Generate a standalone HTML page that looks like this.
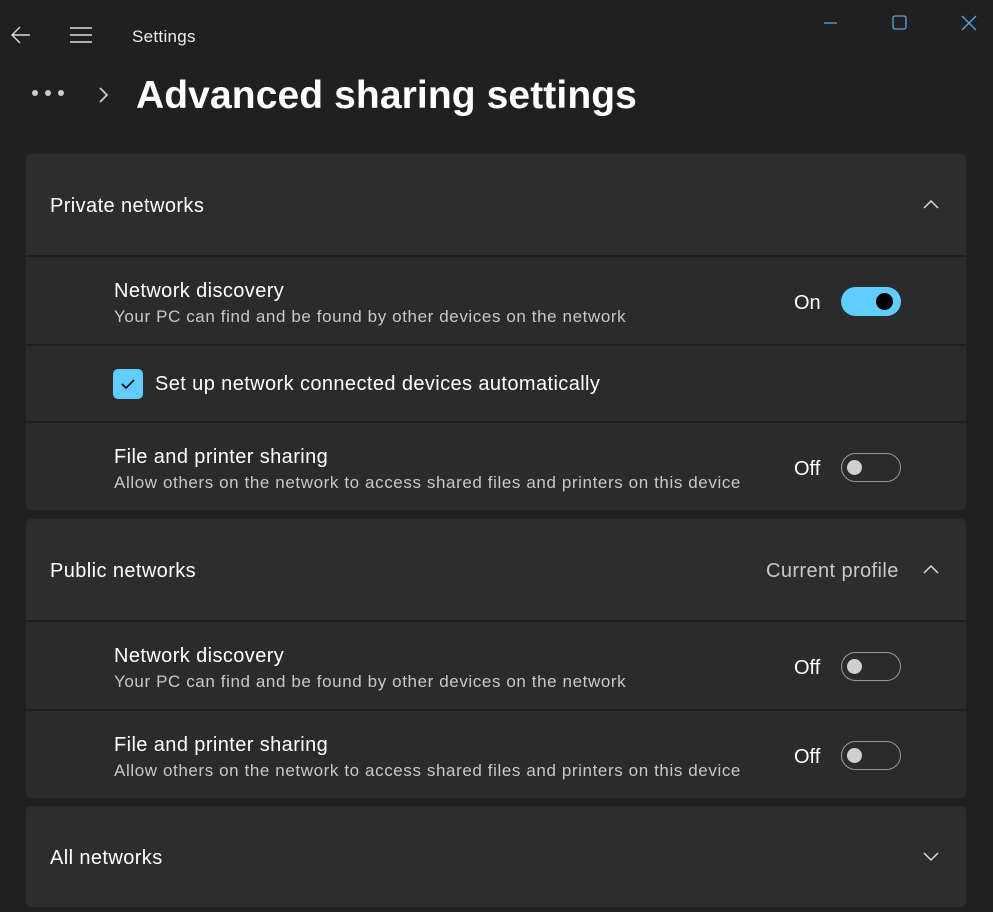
<!DOCTYPE html>
<html><head><meta charset="utf-8"><style>
*{margin:0;padding:0;box-sizing:border-box}
body{width:993px;height:912px;background:#202020;font-family:"Liberation Sans",sans-serif;color:#fff;position:relative;overflow:hidden}
.a{position:absolute}
.card{position:absolute;left:26px;width:940px;background:#2b2b2b;border-radius:5px}
.hdr{position:absolute;left:26px;width:940px;background:#2d2d2d}
.t{position:absolute;font-size:20px;letter-spacing:0.4px;color:#fff}
.s{position:absolute;font-size:17px;letter-spacing:0.6px;color:#c8c8c8}
.lbl{position:absolute;font-size:20px;color:#fff}
.tg{position:absolute;left:841px;width:60px;height:29px;border-radius:15px;border:1.5px solid #9a9a9a}
.tg i{position:absolute;left:5px;top:6px;width:15px;height:15px;border-radius:50%;background:#d0d0d0}
.on{background:#60cdff;border:none}
.on i{left:35px;top:6px;width:17px;height:17px;background:#000}
</style></head><body>
<svg class="a" style="left:10px;top:25px" width="22" height="20"><path d="M20 10H2M10 2L2 10L10 18" stroke="#ddd" stroke-width="1.4" fill="none"/></svg>
<svg class="a" style="left:70px;top:26px" width="22" height="18"><path d="M0 2H22M0 9H22M0 16H22" stroke="#ddd" stroke-width="1.5"/></svg>
<div class="a" style="left:132px;top:27px;font-size:17px;letter-spacing:0.3px;color:#eee">Settings</div>
<svg class="a" style="left:822px;top:15px" width="160" height="16"><path d="M2 8H15" stroke="#5ea6dd" stroke-width="1.3"/><rect x="71" y="1" width="13" height="13" rx="2" stroke="#5ea6dd" stroke-width="1.3" fill="none"/><path d="M140 1L154 15M154 1L140 15" stroke="#5ea6dd" stroke-width="1.3"/></svg>
<svg class="a" style="left:30px;top:88px" width="40" height="10"><circle cx="5" cy="5" r="3" fill="#ccc"/><circle cx="18" cy="5" r="3" fill="#ccc"/><circle cx="31" cy="5" r="3" fill="#ccc"/></svg>
<svg class="a" style="left:97px;top:86px" width="12" height="18"><path d="M3 2L10 9L3 16" stroke="#ccc" stroke-width="1.8" fill="none"/></svg>
<div class="a" style="left:136px;top:74px;font-size:39px;font-weight:bold;letter-spacing:0.1px">Advanced sharing settings</div>

<div class="card" style="top:154px;height:356px"></div>
<div class="hdr" style="top:154px;height:101px;border-radius:5px 5px 0 0"></div>
<div class="a" style="left:26px;top:255px;width:940px;height:2px;background:#1f1f1f"></div>
<div class="a" style="left:26px;top:344px;width:940px;height:2px;background:#1f1f1f"></div>
<div class="a" style="left:26px;top:421px;width:940px;height:2px;background:#1f1f1f"></div>
<div class="t" style="left:50px;top:195px">Private networks</div>
<svg class="a" style="left:922px;top:198px" width="18" height="12"><path d="M2 10L9 3L16 10" stroke="#ddd" stroke-width="1.5" fill="none"/></svg>
<div class="t" style="left:114px;top:280px">Network discovery</div>
<div class="s" style="left:114px;top:307px">Your PC can find and be found by other devices on the network</div>
<div class="lbl" style="left:794px;top:292px">On</div>
<div class="tg on" style="top:287px"><i></i></div>
<div class="a" style="left:113px;top:369px;width:30px;height:30px;border-radius:5px;background:#60cdff"></div>
<svg class="a" style="left:113px;top:369px" width="30" height="30"><path d="M9 15L13 19L21 11" stroke="#000" stroke-width="1.6" fill="none"/></svg>
<div class="t" style="left:155px;top:373px">Set up network connected devices automatically</div>
<div class="t" style="left:114px;top:446px">File and printer sharing</div>
<div class="s" style="left:114px;top:473px">Allow others on the network to access shared files and printers on this device</div>
<div class="lbl" style="left:794px;top:458px">Off</div>
<div class="tg" style="top:453px"><i></i></div>

<div class="card" style="top:519px;height:279px"></div>
<div class="hdr" style="top:519px;height:101px;border-radius:5px 5px 0 0"></div>
<div class="a" style="left:26px;top:620px;width:940px;height:2px;background:#1f1f1f"></div>
<div class="a" style="left:26px;top:709px;width:940px;height:2px;background:#1f1f1f"></div>
<div class="t" style="left:50px;top:560px">Public networks</div>
<div class="a" style="left:766px;top:560px;font-size:20px;letter-spacing:0.4px;color:#c8c8c8">Current profile</div>
<svg class="a" style="left:922px;top:563px" width="18" height="12"><path d="M2 10L9 3L16 10" stroke="#ddd" stroke-width="1.5" fill="none"/></svg>
<div class="t" style="left:114px;top:645px">Network discovery</div>
<div class="s" style="left:114px;top:672px">Your PC can find and be found by other devices on the network</div>
<div class="lbl" style="left:794px;top:657px">Off</div>
<div class="tg" style="top:652px"><i></i></div>
<div class="t" style="left:114px;top:734px">File and printer sharing</div>
<div class="s" style="left:114px;top:761px">Allow others on the network to access shared files and printers on this device</div>
<div class="lbl" style="left:794px;top:746px">Off</div>
<div class="tg" style="top:741px"><i></i></div>

<div class="card" style="top:806px;height:101px;background:#2d2d2d"></div>
<div class="t" style="left:50px;top:847px">All networks</div>
<svg class="a" style="left:922px;top:851px" width="18" height="12"><path d="M2 2L9 9L16 2" stroke="#ddd" stroke-width="1.5" fill="none"/></svg>
</body></html>
